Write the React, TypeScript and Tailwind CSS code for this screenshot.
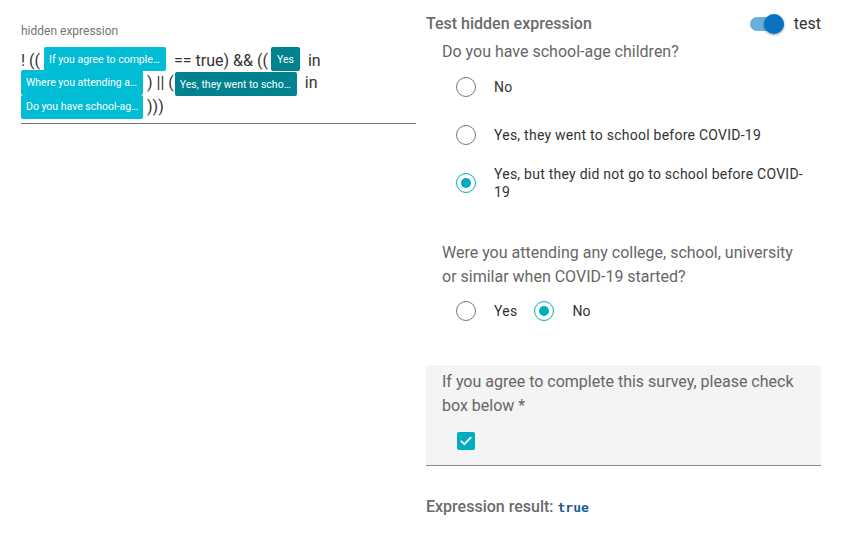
import React from "react";

const font = { fontFamily: "Roboto, 'Noto Sans', sans-serif" };

function Chip({ children, dark, w }: { children: React.ReactNode; dark?: boolean; w?: string }) {
  return (
    <span
      className={`inline-flex items-center h-[24px] pl-[5px] pr-[3px] text-[10.5px] text-white rounded-[2px] overflow-hidden whitespace-nowrap ${
        dark ? "bg-[#00838f]" : "bg-[#00bcd4]"
      } ${w ?? ""}`}
    >
      <span className="overflow-hidden text-ellipsis">{children}</span>
    </span>
  );
}

function Radio({ checked }: { checked?: boolean }) {
  return checked ? (
    <span className="w-[20px] h-[20px] rounded-full border-[1.5px] border-[#00acc1] flex items-center justify-center shrink-0">
      <span className="w-[10px] h-[10px] rounded-full bg-[#00acc1]" />
    </span>
  ) : (
    <span className="w-[20px] h-[20px] rounded-full border border-[#757575] shrink-0" />
  );
}

export default function App() {
  return (
    <div className="w-[861px] h-[560px] bg-white flex" style={font}>
      {/* Left column */}
      <div className="w-[395px] ml-[21px] pt-[24px]">
        <div className="text-[12px] leading-[14px] text-[#757575]">hidden expression</div>
        <div className="mt-[9px] text-[16px] text-[#333] border-b border-[#757575] pb-[4px]">
          <div className="flex items-center h-[23px]">
            <span className="translate-y-[2px]">! ((</span>
            <span className="ml-[4px]"><Chip w="w-[122px] h-[23px]">If you agree to complete this survey, please check box below</Chip></span>
            <span className="ml-[8px] translate-y-[2px]">== true) &amp;&amp; ((</span>
            <span className="ml-[3px]"><Chip dark w="h-[23px] pr-[6px] pl-[6px]">Yes</Chip></span>
            <span className="ml-[8px] translate-y-[2px]">in</span>
          </div>
          <div className="flex items-center h-[25px]">
            <Chip w="w-[122px] h-[25px]">Where you attending any college</Chip>
            <span className="ml-[4px]">) || (</span>
            <span className="ml-[1px] pt-[2px]"><Chip dark w="w-[122px] h-[23px]">Yes, they went to school before COVID-19</Chip></span>
            <span className="ml-[8px]">in</span>
          </div>
          <div className="flex items-center h-[24px]">
            <Chip w="w-[122px]">Do you have school-age children?</Chip>
            <span className="ml-[4px]">)))</span>
          </div>
        </div>
      </div>

      {/* Right column */}
      <div className="w-[395px] ml-[10px] pt-[11px]">
        <div className="flex items-center justify-between h-[26px]">
          <span className="text-[16px] font-medium text-[#6b6b6b]">Test hidden expression</span>
          <div className="flex items-center">
            <div className="relative w-[36px] h-[20px] flex items-center">
              <div className="w-[34px] h-[14px] rounded-full bg-[#6aaedb]" />
              <div className="absolute right-[2px] top-0 w-[20px] h-[20px] rounded-full bg-[#0a72bf] shadow-[0_1px_3px_rgba(0,0,0,0.4)]" />
            </div>
            <span className="ml-[8px] text-[16px] text-[#333]">test</span>
          </div>
        </div>

        <div className="pl-[16px]">
          <div className="mt-[3px] text-[16px] leading-[24px] text-[#666]">Do you have school-age children?</div>
          <div className="pl-[14px] text-[14px] tracking-[0.25px] text-[#333]">
            <div className="flex items-center h-[48px] mt-[-1px]">
              <Radio />
              <span className="ml-[18px]">No</span>
            </div>
            <div className="flex items-center h-[48px]">
              <Radio />
              <span className="ml-[18px]">Yes, they went to school before COVID-19</span>
            </div>
            <div className="flex items-center h-[48px]">
              <Radio checked />
              <span className="ml-[18px] leading-[18px] w-[312px]">Yes, but they did not go to school before COVID-19</span>
            </div>
          </div>

          <div className="mt-[34px] text-[16px] leading-[24px] text-[#666]">
            Were you attending any college, school, university
            <br />
            or similar when COVID-19 started?
          </div>
          <div className="pl-[14px] flex items-center h-[44px] text-[14px] tracking-[0.25px] text-[#333]">
            <Radio />
            <span className="ml-[18px]">Yes</span>
            <span className="ml-[17px]"><Radio checked /></span>
            <span className="ml-[18px]">No</span>
          </div>
        </div>

        <div className="mt-[32px] bg-[#f4f4f4] rounded-t-[4px] border-b border-[#8a8a8a] pl-[16px] pt-[5px] pb-[15px]">
          <div className="text-[16px] leading-[24px] text-[#666]">
            If you agree to complete this survey, please check
            <br />
            box below *
          </div>
          <div className="ml-[15px] mt-[14px] w-[18px] h-[18px] rounded-[2px] bg-[#00acc1] flex items-center justify-center">
            <svg width="14" height="14" viewBox="0 0 24 24" fill="none" stroke="white" strokeWidth="3" strokeLinecap="square">
              <path d="M4 12.5l5 5L20 6.5" />
            </svg>
          </div>
        </div>

        <div className="mt-[29px] text-[16px] font-medium text-[#6b6b6b] flex items-baseline">
          <span>Expression result:</span>
          <span className="ml-[4px] text-[13px] font-bold text-[#1c5a97]" style={{ fontFamily: "'DejaVu Sans Mono', 'Liberation Mono', monospace" }}>true</span>
        </div>
      </div>
    </div>
  );
}
